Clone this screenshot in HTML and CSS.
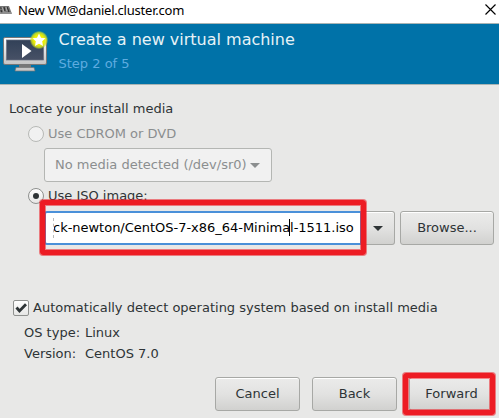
FILE: index.html
```html
<!DOCTYPE html>
<html lang="en">
<head>
<meta charset="utf-8">
<title>New VM</title>
<link rel="stylesheet" href="styles.css">
</head>
<body>
<div class="window">
  <div class="titlebar">
    <svg class="app-icon" width="13" height="10" viewBox="0 0 13 10"><path d="M0 1H9L12 9H0Z" fill="#777"/><path d="M0 3H2M4 2L5 6M7 2L9 7M1 5L2 8" stroke="#333" stroke-width="1.2"/><path d="M2 2L4 7M6 2L7 6M0 8H12" stroke="#aaa"/></svg>
    <span class="window-title">New VM@daniel.cluster.com</span>
    <svg class="close" width="11" height="11" viewBox="0 0 11 11"><path d="M.5 .5L10.5 10.5M10.5 .5L.5 10.5" stroke="#000" stroke-width="1.15"/></svg>
  </div>
  <header class="banner">
    <svg class="vm-icon" width="48" height="44" viewBox="0 0 48 44">
      <defs>
        <linearGradient id="frame" x2="0" y2="1"><stop stop-color="#fff"/><stop offset="1" stop-color="#c4c4c4"/></linearGradient>
        <linearGradient id="screen" x2="0" y2="1"><stop stop-color="#324158"/><stop offset="1" stop-color="#475166"/></linearGradient>
        <radialGradient id="glow"><stop offset=".55" stop-color="#eef000"/><stop offset=".8" stop-color="#d6e51c" stop-opacity=".8"/><stop offset="1" stop-color="#b8df20" stop-opacity="0"/></radialGradient>
      </defs>
      <path d="M19 34H31V38H19Z" fill="#777"/>
      <path d="M16 37.5H34L35 41H15Z" fill="#c8c8c8" stroke="#777" stroke-width=".7"/>
      <rect x="3.5" y="7.5" width="43" height="27" rx="1.5" fill="url(#frame)" stroke="#777"/>
      <rect x="6.5" y="10" width="37" height="20" fill="url(#screen)" stroke="#687080" stroke-width=".7"/>
      <path d="M22 14V28L31.500 21Z" fill="#fff"/>
      <circle cx="39" cy="10" r="9.300" fill="url(#glow)"/>
      <path d="M39 3.500L41 7.800L45.500 8.300L42.200 11.300L43 16L39 13.700L35 16L35.800 11.300L32.500 8.300L37 7.800Z" fill="#fff"/>
    </svg>
    <div class="heading"><h1>Create a new virtual machine</h1><p>Step 2 of 5</p></div>
  </header>
  <main class="content">
    <div class="label">Locate your install media</div>
    <div class="option disabled"><span class="radio"></span><span>Use CDROM or DVD</span></div>
    <div class="combo disabled"><span>No media detected (/dev/sr0)</span><svg width="10" height="5" viewBox="0 0 10 5"><path d="M0 0H10L5 5Z" fill="#8b8e8f"/></svg></div>
    <div class="option iso"><span class="radio on"></span><span>Use ISO image:</span></div>
    <div class="media-row">
      <div class="entry"><div class="clip"><span class="path">ck-newton/CentOS-7-x86_64-Minimal-1511.iso</span></div><i class="caret"></i></div>
      <div class="drop"><svg width="10" height="5" viewBox="0 0 10 5"><path d="M0 0H10L5 5Z" fill="#2e3436"/></svg></div>
      <div class="button browse">Browse...</div>
      <div class="mark mark-entry"></div>
    </div>
    <div class="detect"><span class="check"><svg width="14" height="14" viewBox="0 0 14 14"><path d="M2.500 6.500L5.500 10L12 3.300" fill="none" stroke="#2e3436" stroke-width="2.800"/></svg></span><span>Automatically detect operating system based on install media</span></div>
    <div class="details"><span>OS type:</span><span>Linux</span><span>Version:</span><span>CentOS 7.0</span></div>
  </main>
  <footer class="actions">
    <div class="button">Cancel</div>
    <div class="button">Back</div>
    <div class="forward"><div class="button">Forward</div><div class="mark mark-forward"></div></div>
  </footer>
</div>
</body>
</html>
```

FILE: styles.css
```css
* { box-sizing: border-box; }
body { margin: 0; font: 13px/20px "DejaVu Sans", sans-serif; color: #2e3436; background: #e8e8e7; white-space: nowrap; }
svg { display: block; flex: none; }
.window { width: 499px; height: 418px; overflow: hidden; display: flex; flex-direction: column; }
.titlebar { height: 23px; background: #fff; color: #000; display: flex; align-items: flex-start; padding-right: 3px; flex: none; }
.app-icon { margin-top: 5px; }
.window-title { font: 13px/20px "Noto Sans", sans-serif; letter-spacing: -.22px; margin-left: 5px; }
.close { margin: 4px 0 0 auto; }
.banner { height: 62px; flex: none; background: #0072a8; border-top: 1px solid #a9b4b4; border-bottom: 1px solid #a9b4b4; display: flex; }
.vm-icon { margin-top: 6px; }
.heading { padding: 6px 0 0 10.5px; }
.heading h1 { margin: 0; font-size: 16px; line-height: 20px; font-weight: 400; color: #e7f2f7; }
.heading p { margin: 4px 0 0; color: #5eace0; }
.content { height: 292px; flex: none; padding-top: 14px; }
.label { padding-left: 9px; height: 20px; }
.option { height: 20px; margin-top: 5px; padding-left: 28px; display: flex; align-items: center; gap: 4px; }
.disabled { color: #8b8e8f; }
.radio { width: 16px; height: 16px; border: 1px solid #8f918f; border-radius: 50%; background: linear-gradient(#fff, #e7e7e6); flex: none; display: flex; align-items: center; justify-content: center; }
.disabled .radio { border-color: #b7b9b6; background: #f1f1f1; }
.radio.on::after { content: ""; width: 6px; height: 6px; border-radius: 50%; background: #2e3436; }
.combo { margin: 4px 0 0 44px; width: 228px; height: 34px; border: 1px solid #b4b6b3; border-radius: 3px; background: #f1f1f1; display: flex; align-items: center; justify-content: space-between; padding: 0 11px 0 10px; }
.iso { margin-top: 4px; }
.media-row { position: relative; display: flex; margin: 5px 0 0 44px; height: 34px; }
.entry { position: relative; width: 318px; border: 2px solid #4a90d9; border-radius: 3px 0 0 3px; background: #fff; color: #000; padding: 5px 3px 5px 7px; }
.clip { overflow: hidden; border-left: 1px dashed #bbb; }
.path { margin-left: -1px; letter-spacing: -.02px; }
.caret { position: absolute; left: 243px; top: 6px; width: 1px; height: 17px; background: #000; }
.drop, .button { border: 1px solid #a7a8a5; border-radius: 3px; background: linear-gradient(#ebebea, #e2e2e1 50%, #d1d1cf); box-shadow: inset 0 1px #fff; display: flex; align-items: center; justify-content: center; }
.drop { width: 33px; border-left: 0; border-radius: 0 3px 3px 0; }
.button { width: 85px; height: 34px; }
.browse { width: 94px; margin-left: 5px; }
.mark { position: absolute; border: 5px solid #ed1c24; border-radius: 3px; box-shadow: 0 0 0 1px #ed1c2488, inset 0 0 0 1px #ed1c2488; }
.mark-entry { left: -4px; top: -11px; width: 326px; height: 55px; }
.detect { display: flex; align-items: center; gap: 4px; height: 20px; margin: 53px 0 0 13px; }
.check { width: 16px; height: 16px; border: 1px solid #8f918f; border-radius: 2px; background: linear-gradient(#fff, #e6e6e5); flex: none; }
.details { display: grid; grid-template-columns: 61px auto; grid-auto-rows: 21px; margin: 5px 0 0 24px; }
.actions { display: flex; gap: 12px; padding-left: 215px; flex: none; }
.forward { position: relative; }
.mark-forward { left: -6px; top: -4px; width: 92px; height: 42px; }
```
